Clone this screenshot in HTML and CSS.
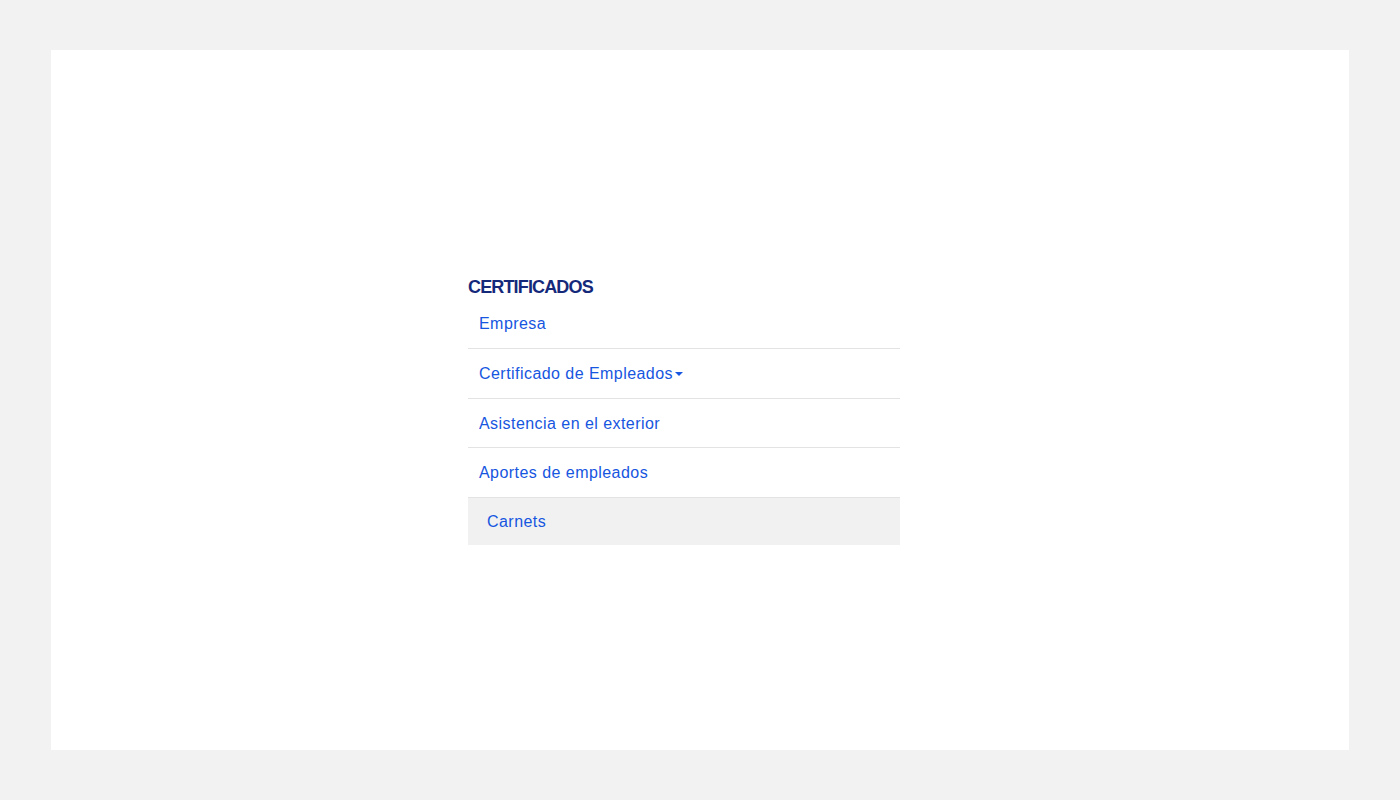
FILE: index.html
```html
<!DOCTYPE html>
<html lang="es">
<head>
<meta charset="utf-8">
<title>Certificados</title>
<link rel="stylesheet" href="styles.css">
</head>
<body>
<div class="page">
  <div class="panel">
    <nav class="menu">
      <h2 class="menu-title">CERTIFICADOS</h2>
      <ul class="menu-list">
        <li class="menu-item"><a href="#">Empresa</a></li>
        <li class="menu-item"><a href="#">Certificado de Empleados<span class="caret"></span></a></li>
        <li class="menu-item"><a href="#">Asistencia en el exterior</a></li>
        <li class="menu-item"><a href="#">Aportes de empleados</a></li>
        <li class="menu-item active"><a href="#">Carnets</a></li>
      </ul>
    </nav>
  </div>
</div>
</body>
</html>
```

FILE: styles.css
```css
html, body {
  margin: 0;
  padding: 0;
  background: #f2f2f2;
}
.page {
  padding: 50px 51px;
}
.panel {
  background: #ffffff;
  height: 700px;
  box-sizing: border-box;
  padding: 226px 0 0 417px;
}
.menu {
  width: 432px;
  font-family: "Liberation Sans", Arial, sans-serif;
}
.menu-title {
  margin: 0;
  font-family: "Liberation Sans", Arial, sans-serif;
  font-size: 18px;
  line-height: 23px;
  font-weight: 700;
  color: #14297a;
  letter-spacing: -0.85px;
  height: 23.4px;
}
.menu-list {
  list-style: none;
  margin: 0;
  padding: 0;
}
.menu-item {
  border-bottom: 1px solid #e3e3e3;
}
.menu-item a {
  display: block;
  padding: 13.1px 11px 11.5px;
  font-size: 16px;
  line-height: 24px;
  color: #1656e0;
  text-decoration: none;
  letter-spacing: 0.45px;
}
.menu-item.active {
  border-bottom: none;
  background: #f1f1f1;
}
.menu-item.active a {
  padding: 12.3px 19px 10.7px;
}
.caret {
  display: inline-block;
  width: 0;
  height: 0;
  margin-left: 2px;
  vertical-align: 3px;
  border-left: 4.5px solid transparent;
  border-right: 4.5px solid transparent;
  border-top: 4.5px solid #1656e0;
}
```
